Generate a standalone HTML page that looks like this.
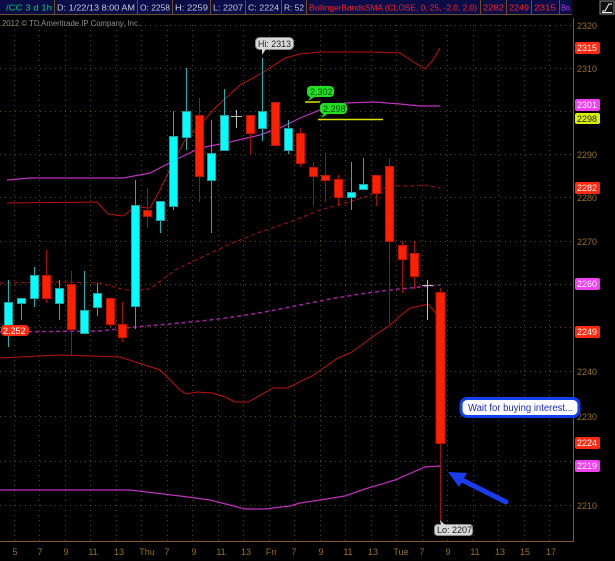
<!DOCTYPE html>
<html><head><meta charset="utf-8"><style>
html,body{margin:0;padding:0;background:#000;width:615px;height:561px;overflow:hidden}
svg{display:block}
text{font-family:"Liberation Sans",sans-serif}
</style></head><body>
<svg width="615" height="561" viewBox="0 0 615 561" xmlns="http://www.w3.org/2000/svg">
<rect width="615" height="561" fill="#000"/>
<!-- header -->
<rect x="0" y="0" width="572" height="15" fill="#0a0d48"/>
<g stroke="#6a5020" stroke-width="1">
<line x1="54.5" y1="0" x2="54.5" y2="15"/><line x1="137.5" y1="0" x2="137.5" y2="15"/><line x1="172.5" y1="0" x2="172.5" y2="15"/><line x1="210.5" y1="0" x2="210.5" y2="15"/><line x1="245.5" y1="0" x2="245.5" y2="15"/><line x1="281.5" y1="0" x2="281.5" y2="15"/><line x1="306.5" y1="0" x2="306.5" y2="15"/><line x1="480.5" y1="0" x2="480.5" y2="15"/><line x1="506.5" y1="0" x2="506.5" y2="15"/><line x1="531.5" y1="0" x2="531.5" y2="15"/><line x1="559.5" y1="0" x2="559.5" y2="15"/><line x1="0" y1="14.5" x2="572" y2="14.5"/>
</g>
<g font-size="8.5" fill="#c8c8d8">
<text x="6" y="10.5" fill="#00d060" textLength="46" lengthAdjust="spacingAndGlyphs">/CC 3 d 1h</text>
<text x="57" y="10.5" textLength="78" lengthAdjust="spacingAndGlyphs">D: 1/22/13 8:00 AM</text>
<text x="140" y="10.5" textLength="30" lengthAdjust="spacingAndGlyphs">O: 2258</text>
<text x="175" y="10.5" textLength="33" lengthAdjust="spacingAndGlyphs">H: 2259</text>
<text x="213" y="10.5" textLength="30" lengthAdjust="spacingAndGlyphs">L: 2207</text>
<text x="248" y="10.5" textLength="31" lengthAdjust="spacingAndGlyphs">C: 2224</text>
<text x="284" y="10.5" textLength="20" lengthAdjust="spacingAndGlyphs">R: 52</text>
<text x="309" y="10.5" fill="#ff2020" textLength="168" lengthAdjust="spacingAndGlyphs">BollingerBandsSMA (CLOSE, 0, 25, -2.0, 2.0)</text>
<text x="483" y="10.5" fill="#ff2020" textLength="21" lengthAdjust="spacingAndGlyphs">2282</text>
<text x="509" y="10.5" fill="#ff2020" textLength="20" lengthAdjust="spacingAndGlyphs">2249</text>
<text x="534" y="10.5" fill="#ff2020" textLength="22" lengthAdjust="spacingAndGlyphs">2315</text>
<text x="561" y="10.5" fill="#b040e0" textLength="11" lengthAdjust="spacingAndGlyphs">Bo.</text>
</g>
<rect x="575" y="0" width="40" height="16" fill="#000"/>
<rect x="600" y="1" width="14" height="13" fill="#101010" stroke="#888"/>
<path d="M602 11 L605 11 L609 4 L612 4 M602 12.5 H612" stroke="#fff" fill="none"/>
<text x="2" y="26" font-size="8" fill="#909090" textLength="138" lengthAdjust="spacingAndGlyphs">2012 © TD Ameritrade IP Company, Inc.</text>
<!-- grid -->
<g stroke="#5a4618" stroke-width="1" stroke-dasharray="1,4">
<line x1="0" y1="25.5" x2="573" y2="25.5"/><line x1="0" y1="68.5" x2="573" y2="68.5"/><line x1="0" y1="111.5" x2="573" y2="111.5"/><line x1="0" y1="154.5" x2="573" y2="154.5"/><line x1="0" y1="197.5" x2="573" y2="197.5"/><line x1="0" y1="241.5" x2="573" y2="241.5"/><line x1="0" y1="284.5" x2="573" y2="284.5"/><line x1="0" y1="327.5" x2="573" y2="327.5"/><line x1="0" y1="371.5" x2="573" y2="371.5"/><line x1="0" y1="416.5" x2="573" y2="416.5"/><line x1="0" y1="461.5" x2="573" y2="461.5"/><line x1="0" y1="505.5" x2="573" y2="505.5"/>
</g>
<g stroke="#5a4618" stroke-width="1" stroke-dasharray="1,4">
<line x1="14.5" y1="25" x2="14.5" y2="541"/><line x1="39.5" y1="25" x2="39.5" y2="541"/><line x1="65.5" y1="25" x2="65.5" y2="541"/><line x1="90.5" y1="25" x2="90.5" y2="541"/><line x1="116.5" y1="25" x2="116.5" y2="541"/><line x1="141.5" y1="25" x2="141.5" y2="541"/><line x1="167.5" y1="25" x2="167.5" y2="541"/><line x1="192.5" y1="25" x2="192.5" y2="541"/><line x1="218.5" y1="25" x2="218.5" y2="541"/><line x1="243.5" y1="25" x2="243.5" y2="541"/><line x1="269.5" y1="25" x2="269.5" y2="541"/><line x1="294.5" y1="25" x2="294.5" y2="541"/><line x1="320.5" y1="25" x2="320.5" y2="541"/><line x1="345.5" y1="25" x2="345.5" y2="541"/><line x1="371.5" y1="25" x2="371.5" y2="541"/><line x1="396.5" y1="25" x2="396.5" y2="541"/><line x1="422.5" y1="25" x2="422.5" y2="541"/><line x1="447.5" y1="25" x2="447.5" y2="541"/><line x1="473.5" y1="25" x2="473.5" y2="541"/><line x1="498.5" y1="25" x2="498.5" y2="541"/><line x1="524.5" y1="25" x2="524.5" y2="541"/><line x1="549.5" y1="25" x2="549.5" y2="541"/>
</g>
<!-- axes -->
<path d="M0 541.5 H573.5 V18" stroke="#7a5a20" fill="none"/>
<g font-size="9" fill="#9a7028">
<text x="577" y="29">2320</text><text x="577" y="72">2310</text><text x="577" y="158">2290</text><text x="577" y="201">2280</text><text x="577" y="245">2270</text><text x="577" y="375">2240</text><text x="577" y="420">2230</text><text x="577" y="509">2210</text>
</g>
<g font-size="9" fill="#9a7028" text-anchor="middle">
<text x="15" y="555">5</text><text x="40" y="555">7</text><text x="66" y="555">9</text><text x="93" y="555">11</text><text x="119" y="555">13</text><text x="147" y="555">Thu</text><text x="167" y="555">7</text><text x="194" y="555">9</text><text x="221" y="555">11</text><text x="246" y="555">13</text><text x="271" y="555">Fri</text><text x="294" y="555">7</text><text x="321" y="555">9</text><text x="348" y="555">11</text><text x="373" y="555">13</text><text x="401" y="555">Tue</text><text x="422" y="555">7</text><text x="448" y="555">9</text><text x="475" y="555">11</text><text x="500" y="555">13</text><text x="525" y="555">15</text><text x="551" y="555">17</text>
</g>
<!-- bands -->
<polyline fill="none" stroke="#c01010" stroke-width="1" points="7,203 97,202 108,214 123,216 135,207 150,208 160,190 172,165 185,140 200,125 215,108 240,85 262,73 285,58 300,54 320,52 370,52 400,53 412,61 425,69 433,60 440,48"/>
<polyline fill="none" stroke="#b01010" stroke-width="1" stroke-dasharray="4,3" points="0,283 60,282 100,283 125,290 150,289 175,270 200,258 230,244 260,232 290,222 320,210 345,203 365,197 390,186 410,186 425,185 440,188"/>
<polyline fill="none" stroke="#c01010" stroke-width="1" points="0,358 60,355 120,357 160,370 180,390 186,394 197,392 212,393 225,397 235,402 248,402 273,388 287,388 312,376 338,358 352,352 375,335 390,325 400,316 410,308 420,306 428,304 440,318"/>
<polyline fill="none" stroke="#c030c0" stroke-width="1.2" points="7,180 30,178 123,178 150,173 175,160 200,148 230,142 260,135 280,128 300,118 320,110 345,103 375,102 400,104 420,106 440,106"/>
<polyline fill="none" stroke="#a020a0" stroke-width="1.5" stroke-dasharray="4,3" points="0,332 100,331 135,327 170,324 210,320 240,316 270,311 300,305 330,299 360,294 390,290 420,287 440,285"/>
<polyline fill="none" stroke="#c030c0" stroke-width="1.2" points="0,490 130,490 180,496 210,500 245,509 265,509 290,506 300,503 320,500 345,496 365,489 395,480 425,467 440,466"/>
<!-- yellow lines -->
<line x1="305" y1="102" x2="320" y2="102" stroke="#e0e000" stroke-width="1.5"/>
<line x1="318" y1="119.5" x2="383" y2="119.5" stroke="#e0e000" stroke-width="1.5"/>
<!-- candles -->
<g stroke="#20b0b0" stroke-width="1">
<line x1="8.5" y1="280" x2="8.5" y2="347"/><line x1="21.5" y1="298" x2="21.5" y2="320"/><line x1="34.5" y1="267" x2="34.5" y2="307"/><line x1="59.5" y1="280" x2="59.5" y2="320"/><line x1="84.5" y1="271" x2="84.5" y2="333"/><line x1="97.5" y1="283" x2="97.5" y2="316"/><line x1="135.5" y1="180" x2="135.5" y2="329"/><line x1="160.5" y1="201" x2="160.5" y2="233"/><line x1="173.5" y1="111" x2="173.5" y2="210"/><line x1="186.5" y1="68" x2="186.5" y2="150"/><line x1="211.5" y1="120" x2="211.5" y2="233"/><line x1="224.5" y1="89" x2="224.5" y2="150"/><line x1="262.5" y1="58" x2="262.5" y2="141"/><line x1="288.5" y1="120" x2="288.5" y2="154"/><line x1="351.5" y1="162" x2="351.5" y2="210"/><line x1="363.5" y1="158" x2="363.5" y2="189"/>
</g>
<g stroke="#a01010" stroke-width="1">
<line x1="46.5" y1="250" x2="46.5" y2="303"/><line x1="71.5" y1="271" x2="71.5" y2="355"/><line x1="110.5" y1="298" x2="110.5" y2="327"/><line x1="122.5" y1="302" x2="122.5" y2="342"/><line x1="147.5" y1="188" x2="147.5" y2="228"/><line x1="199.5" y1="98" x2="199.5" y2="202"/><line x1="250.5" y1="115" x2="250.5" y2="154"/><line x1="300.5" y1="128" x2="300.5" y2="167"/><line x1="313.5" y1="162" x2="313.5" y2="206"/><line x1="325.5" y1="153" x2="325.5" y2="202"/><line x1="338.5" y1="175" x2="338.5" y2="206"/><line x1="376.5" y1="175" x2="376.5" y2="206"/><line x1="389.5" y1="158" x2="389.5" y2="324"/><line x1="402.5" y1="241" x2="402.5" y2="293"/><line x1="414.5" y1="241" x2="414.5" y2="289"/><line x1="440.5" y1="288" x2="440.5" y2="522"/>
</g>
<g fill="#00ffff" stroke="#20a0a0">
<rect x="4.5" y="302.5" width="8" height="25"/><rect x="17.5" y="298.5" width="8" height="5"/><rect x="30.5" y="275.5" width="8" height="23"/><rect x="55.5" y="288.5" width="8" height="15"/><rect x="80.5" y="310.5" width="8" height="23"/><rect x="93.5" y="293.5" width="8" height="14"/><rect x="131.5" y="205.5" width="8" height="101"/><rect x="156.5" y="201.5" width="8" height="19"/><rect x="169.5" y="136.5" width="8" height="70"/><rect x="182.5" y="111.5" width="8" height="26"/><rect x="207.5" y="153.5" width="8" height="27"/><rect x="220.5" y="115.5" width="8" height="35"/><rect x="258.5" y="111.5" width="8" height="17"/><rect x="284.5" y="128.5" width="8" height="22"/><rect x="347.5" y="192.5" width="8" height="5"/><rect x="359.5" y="184.5" width="8" height="5"/>
</g>
<g fill="#ff2000" stroke="#c01000">
<rect x="42.5" y="275.5" width="8" height="23"/><rect x="67.5" y="284.5" width="8" height="45"/><rect x="106.5" y="298.5" width="8" height="26"/><rect x="118.5" y="324.5" width="8" height="13"/><rect x="143.5" y="210.5" width="8" height="6"/><rect x="195.5" y="115.5" width="8" height="61"/><rect x="246.5" y="115.5" width="8" height="18"/><rect x="271.5" y="102.5" width="8" height="43"/><rect x="296.5" y="133.5" width="8" height="30"/><rect x="309.5" y="167.5" width="8" height="9"/><rect x="321.5" y="175.5" width="8" height="5"/><rect x="334.5" y="179.5" width="8" height="18"/><rect x="372.5" y="175.5" width="8" height="18"/><rect x="385.5" y="166.5" width="8" height="75"/><rect x="398.5" y="245.5" width="8" height="14"/><rect x="410.5" y="253.5" width="8" height="23"/><rect x="436" y="292.5" width="9" height="151"/>
</g>
<g stroke="#c0c0c0" stroke-width="1">
<line x1="236.5" y1="110" x2="236.5" y2="128"/><line x1="231" y1="116.5" x2="242" y2="116.5"/>
<line x1="427.5" y1="280" x2="427.5" y2="320"/><line x1="422" y1="285.5" x2="433" y2="285.5"/>
</g>
<!-- bubbles -->
<rect x="255.5" y="37.5" width="38" height="12" rx="4" fill="#d8d8d8" stroke="#888"/>
<path d="M262 49 L262 55 L266 49Z" fill="#d8d8d8"/>
<text x="258" y="47" font-size="9" fill="#222" textLength="33" lengthAdjust="spacingAndGlyphs">Hi: 2313</text>
<rect x="307" y="86" width="27" height="11" rx="4" fill="#20e020"/>
<path d="M311 96 L308 101 L316 96Z" fill="#20e020"/>
<text x="310" y="95" font-size="9" fill="#114411">2,302</text>
<rect x="320" y="103" width="27" height="11" rx="4" fill="#20e020"/>
<path d="M324 113 L321 118 L329 113Z" fill="#20e020"/>
<text x="323" y="112" font-size="9" fill="#114411">2,298</text>
<rect x="1" y="325" width="28" height="11" rx="4" fill="#ff2a10"/>
<text x="3" y="334" font-size="9" fill="#fff">2,252</text>
<rect x="434.5" y="524.5" width="38" height="11" rx="3" fill="#d8d8d8" stroke="#888"/>
<path d="M440 520 L441 525 L445 525Z" fill="#d8d8d8"/>
<text x="437" y="533" font-size="9" fill="#222">Lo: 2207</text>
<rect x="461" y="398.5" width="118" height="18" rx="6" fill="#fff" stroke="#1040f0" stroke-width="3"/>
<text x="468" y="411" font-size="10" fill="#1a2ac0" textLength="105" lengthAdjust="spacingAndGlyphs">Wait for buying interest...</text>
<!-- arrow -->
<line x1="506" y1="502" x2="458" y2="478" stroke="#1a3cf0" stroke-width="5" stroke-linecap="round"/>
<path d="M448 472 L467 473 L459 487Z" fill="#1a3cf0"/>
<!-- right labels -->
<g font-size="9" fill="#fff">
<rect x="575" y="42" width="25" height="12" rx="2" fill="#ff2a10"/><text x="577" y="51">2315</text>
<rect x="575" y="99" width="25" height="12" rx="2" fill="#f040f0"/><text x="577" y="108">2301</text>
<rect x="575" y="113" width="25" height="11" rx="2" fill="#d8f000"/><text x="577" y="122" fill="#222">2298</text>
<rect x="575" y="182" width="25" height="12" rx="2" fill="#ff2a10"/><text x="577" y="191">2282</text>
<rect x="575" y="278" width="25" height="12" rx="2" fill="#f040f0"/><text x="577" y="287">2260</text>
<rect x="575" y="326" width="25" height="12" rx="2" fill="#ff2a10"/><text x="577" y="335">2249</text>
<rect x="575" y="437" width="25" height="12" rx="2" fill="#ff2a10"/><text x="577" y="446">2224</text>
<rect x="575" y="460" width="25" height="12" rx="2" fill="#f040f0"/><text x="577" y="469">2219</text>
</g>
</svg>
</body></html>
